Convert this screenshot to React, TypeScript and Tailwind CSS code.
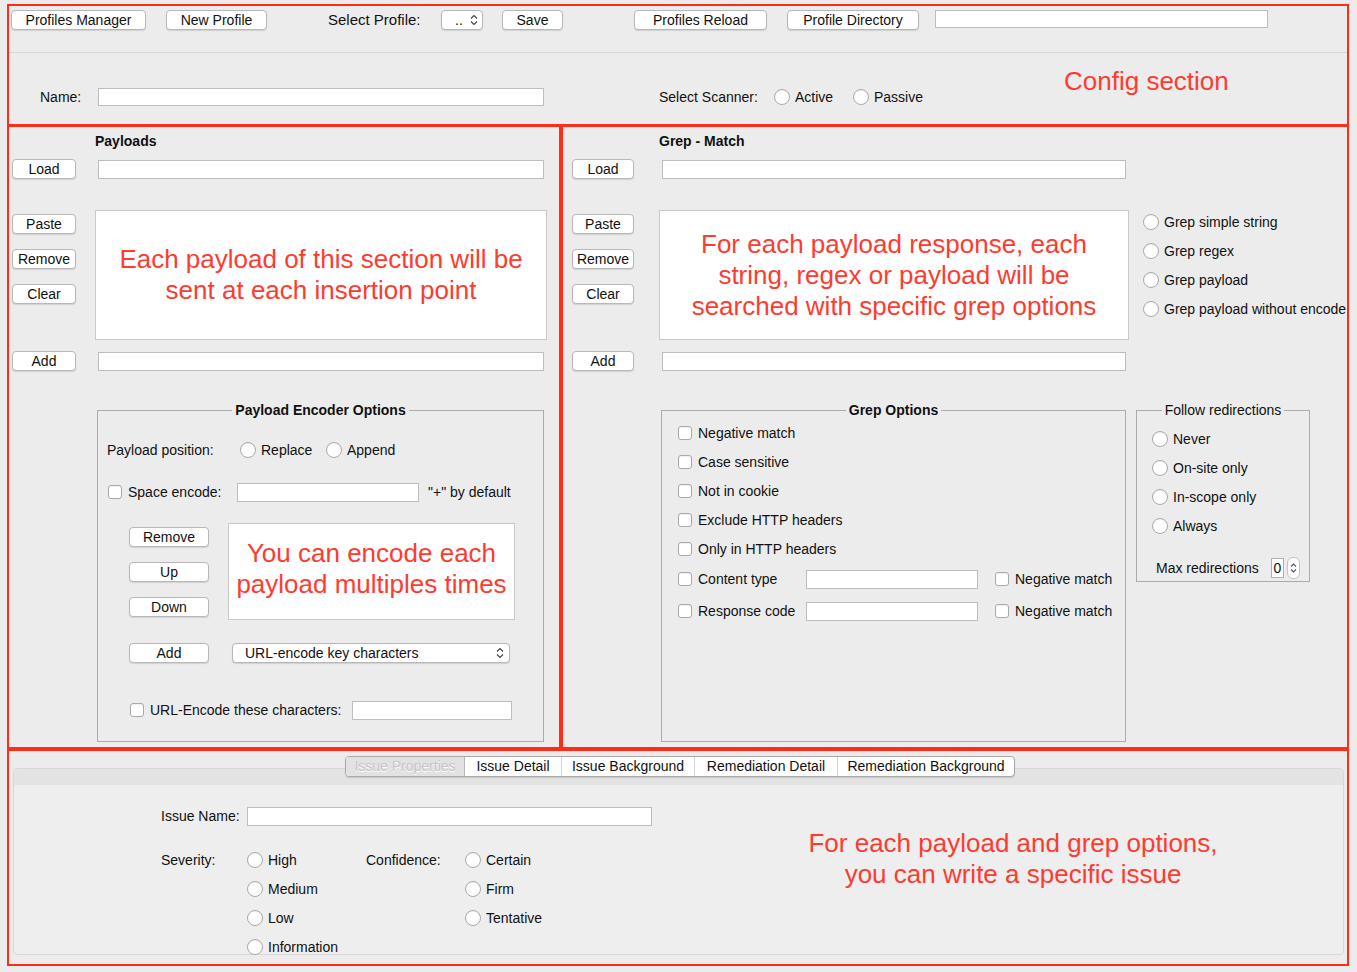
import React from 'react'

// Burp extension "BurpBounty" style profile editor, annotated with red boxes

function Btn({ label, w }: { label: string; w: string }) {
  return (
    <button
      className={`${w} h-[20px] shrink-0 flex items-center justify-center rounded-[4px] border border-[#b8b8b8] bg-white text-[14px] leading-none text-[#111] shadow-[0_1px_1px_rgba(0,0,0,0.12)]`}
    >
      {label}
    </button>
  )
}

function Field({ w, h = 'h-[19px]' }: { w: string; h?: string }) {
  return <div className={`${w} ${h} shrink-0 border border-[#bdbdbd] bg-white`} />
}

function Radio({ label, w = '' }: { label: string; w?: string }) {
  return (
    <div className={`${w} flex items-center shrink-0`}>
      <span className="w-[16px] h-[16px] shrink-0 rounded-full border border-[#a9a9a9] bg-white shadow-[inset_0_1px_1px_rgba(0,0,0,0.06)]" />
      <span className="ml-[5px] text-[14px] whitespace-nowrap">{label}</span>
    </div>
  )
}

function Check({ label, w = '' }: { label: string; w?: string }) {
  return (
    <div className="flex items-center shrink-0">
      <span className="w-[14px] h-[14px] shrink-0 rounded-[3px] border border-[#a9a9a9] bg-white shadow-[inset_0_1px_1px_rgba(0,0,0,0.06)]" />
      <span className={`${w} ml-[6px] text-[14px] whitespace-nowrap`}>{label}</span>
    </div>
  )
}

function Chevrons({ className = '' }: { className?: string }) {
  return (
    <svg width="8" height="12" viewBox="0 0 8 12" className={className}>
      <path d="M1 4.5 L4 1.5 L7 4.5 M1 7.5 L4 10.5 L7 7.5" fill="none" stroke="#444" strokeWidth="1.2" />
    </svg>
  )
}

function Note({ children, className = '' }: { children: React.ReactNode; className?: string }) {
  return (
    <div className={`text-[26px] leading-[31px] text-[#ff3b30] text-center font-['Liberation_Sans',Arial,sans-serif] ${className}`}>
      {children}
    </div>
  )
}

export default function App() {
  return (
    <div className="w-[1357px] h-[972px] overflow-hidden bg-[#ececec] pt-[4px] pl-[7px] text-[#111] font-['Liberation_Sans',Arial,sans-serif]">
      {/* Config section */}
      <div className="w-[1342px] h-[122px] border-2 border-[#ff2d16]">
        <div className="flex items-center h-[20px] mt-[4px]">
          <div className="ml-[2px]">
            <Btn label="Profiles Manager" w="w-[135px]" />
          </div>
          <div className="ml-[20px]">
            <Btn label="New Profile" w="w-[101px]" />
          </div>
          <span className="ml-[61px] w-[113px] text-[15px]">Select Profile:</span>
          <div className="w-[42px] h-[20px] flex items-center rounded-[4px] border border-[#b8b8b8] bg-white shadow-[0_1px_1px_rgba(0,0,0,0.12)]">
            <span className="ml-[13px] text-[14px] leading-none">..</span>
            <Chevrons className="ml-[7px]" />
          </div>
          <div className="ml-[19px]">
            <Btn label="Save" w="w-[61px]" />
          </div>
          <div className="ml-[71px]">
            <Btn label="Profiles Reload" w="w-[133px]" />
          </div>
          <div className="ml-[20px]">
            <Btn label="Profile Directory" w="w-[132px]" />
          </div>
          <div className="ml-[16px] self-start">
            <Field w="w-[333px]" h="h-[18px]" />
          </div>
        </div>
        <div className="mt-[22px] h-px bg-[#d6d6d6]" />
        <div className="flex items-center h-[18px] mt-[35px]">
          <span className="ml-[31px] w-[58px] text-[14px]">Name:</span>
          <Field w="w-[446px]" h="h-[18px]" />
          <span className="ml-[115px] w-[115px] text-[14px]">Select Scanner:</span>
          <Radio label="Active" w="w-[79px]" />
          <Radio label="Passive" w="w-[80px]" />
          <Note className="ml-[131px] mb-[32px] whitespace-nowrap">Config section</Note>
        </div>
      </div>

      <div className="flex -mt-[1px]">
        {/* Payloads */}
        <div className="w-[554px] h-[624px] border-2 border-[#ff2d16]">
          <div className="h-[18px] mt-[5px] pl-[86px] flex items-center text-[14px] font-bold">Payloads</div>
          <div className="flex items-center h-[20px] mt-[9px]">
            <div className="ml-[3px]">
              <Btn label="Load" w="w-[64px]" />
            </div>
            <div className="ml-[22px]">
              <Field w="w-[446px]" />
            </div>
          </div>
          <div className="flex mt-[31px]">
            <div className="ml-[3px] pt-[4px] flex flex-col gap-[15px]">
              <Btn label="Paste" w="w-[64px]" />
              <Btn label="Remove" w="w-[64px]" />
              <Btn label="Clear" w="w-[64px]" />
            </div>
            <div className="ml-[19px] w-[452px] h-[130px] border border-[#c8c8c8] bg-white flex items-center justify-center">
              <Note>
                Each payload of this section will be
                <br />
                sent at each insertion point
              </Note>
            </div>
          </div>
          <div className="flex items-center h-[20px] mt-[11px]">
            <div className="ml-[3px]">
              <Btn label="Add" w="w-[64px]" />
            </div>
            <div className="ml-[22px]">
              <Field w="w-[446px]" />
            </div>
          </div>

          <fieldset className="mt-[30px] ml-[88px] w-[447px] h-[341px] border border-[#ababab]">
            <legend className="mx-auto px-[3px] text-[14px] leading-[18px] font-bold">Payload Encoder Options</legend>
            <div className="flex items-center h-[20px] mt-[21px]">
              <span className="ml-[9px] w-[133px] text-[14px]">Payload position:</span>
              <Radio label="Replace" w="w-[86px]" />
              <Radio label="Append" />
            </div>
            <div className="flex items-center h-[20px] mt-[22px]">
              <div className="ml-[10px]">
                <Check label="Space encode:" w="w-[109px]" />
              </div>
              <Field w="w-[182px]" />
              <span className="ml-[9px] text-[14px]">"+" by default</span>
            </div>
            <div className="flex mt-[21px]">
              <div className="ml-[31px] pt-[4px] flex flex-col gap-[15px]">
                <Btn label="Remove" w="w-[80px]" />
                <Btn label="Up" w="w-[80px]" />
                <Btn label="Down" w="w-[80px]" />
              </div>
              <div className="ml-[19px] w-[287px] h-[97px] border border-[#c8c8c8] bg-white flex items-center justify-center pb-[6px]">
                <Note className="whitespace-nowrap">
                  You can encode each
                  <br />
                  payload multiples times
                </Note>
              </div>
            </div>
            <div className="flex items-center h-[20px] mt-[23px]">
              <div className="ml-[31px]">
                <Btn label="Add" w="w-[80px]" />
              </div>
              <div className="ml-[23px] w-[278px] h-[20px] flex items-center rounded-[4px] border border-[#b8b8b8] bg-white shadow-[0_1px_1px_rgba(0,0,0,0.12)]">
                <span className="ml-[12px] text-[14px] leading-none">URL-encode key characters</span>
                <Chevrons className="ml-auto mr-[5px]" />
              </div>
            </div>
            <div className="flex items-center h-[20px] mt-[37px]">
              <div className="ml-[32px]">
                <Check label="URL-Encode these characters:" w="w-[202px]" />
              </div>
              <Field w="w-[160px]" />
            </div>
          </fieldset>
        </div>

        {/* Grep - Match */}
        <div className="w-[788px] h-[624px] border-2 border-[#ff2d16]">
          <div className="h-[18px] mt-[5px] pl-[96px] flex items-center text-[14px] font-bold">Grep - Match</div>
          <div className="flex items-center h-[20px] mt-[9px]">
            <div className="ml-[9px]">
              <Btn label="Load" w="w-[62px]" />
            </div>
            <div className="ml-[28px]">
              <Field w="w-[464px]" />
            </div>
          </div>
          <div className="flex mt-[31px]">
            <div className="ml-[9px] pt-[4px] flex flex-col gap-[15px]">
              <Btn label="Paste" w="w-[62px]" />
              <Btn label="Remove" w="w-[62px]" />
              <Btn label="Clear" w="w-[62px]" />
            </div>
            <div className="ml-[25px] w-[470px] h-[130px] border border-[#c8c8c8] bg-white flex items-center justify-center">
              <Note>
                For each payload response, each
                <br />
                string, regex or payload will be
                <br />
                searched with specific grep options
              </Note>
            </div>
            <div className="ml-[14px] pt-[2px] flex flex-col gap-[9px]">
              <div className="h-[20px] flex items-center"><Radio label="Grep simple string" /></div>
              <div className="h-[20px] flex items-center"><Radio label="Grep regex" /></div>
              <div className="h-[20px] flex items-center"><Radio label="Grep payload" /></div>
              <div className="h-[20px] flex items-center"><Radio label="Grep payload without encode" /></div>
            </div>
          </div>
          <div className="flex items-center h-[20px] mt-[11px]">
            <div className="ml-[9px]">
              <Btn label="Add" w="w-[62px]" />
            </div>
            <div className="ml-[28px]">
              <Field w="w-[464px]" />
            </div>
          </div>

          <div className="flex items-start mt-[30px]">
            <fieldset className="ml-[98px] w-[465px] h-[341px] border border-[#ababab]">
              <legend className="mx-auto px-[3px] text-[14px] leading-[18px] font-bold">Grep Options</legend>
              <div className="flex flex-col pl-[16px]">
                <div className="h-[20px] flex items-center mt-[4px]"><Check label="Negative match" /></div>
                <div className="h-[20px] flex items-center mt-[9px]"><Check label="Case sensitive" /></div>
                <div className="h-[20px] flex items-center mt-[9px]"><Check label="Not in cookie" /></div>
                <div className="h-[20px] flex items-center mt-[9px]"><Check label="Exclude HTTP headers" /></div>
                <div className="h-[20px] flex items-center mt-[9px]"><Check label="Only in HTTP headers" /></div>
                <div className="h-[20px] flex items-center mt-[10px]">
                  <Check label="Content type" w="w-[108px]" />
                  <Field w="w-[172px]" />
                  <div className="ml-[17px]"><Check label="Negative match" /></div>
                </div>
                <div className="h-[20px] flex items-center mt-[12px]">
                  <Check label="Response code" w="w-[108px]" />
                  <Field w="w-[172px]" />
                  <div className="ml-[17px]"><Check label="Negative match" /></div>
                </div>
              </div>
            </fieldset>
            <fieldset className="ml-[10px] w-[174px] h-[181px] border border-[#ababab]">
              <legend className="mx-auto px-[3px] text-[14px] leading-[18px]">Follow redirections</legend>
              <div className="flex flex-col pl-[15px]">
                <div className="h-[20px] flex items-center mt-[10px]"><Radio label="Never" /></div>
                <div className="h-[20px] flex items-center mt-[9px]"><Radio label="On-site only" /></div>
                <div className="h-[20px] flex items-center mt-[9px]"><Radio label="In-scope only" /></div>
                <div className="h-[20px] flex items-center mt-[9px]"><Radio label="Always" /></div>
              </div>
              <div className="flex items-center h-[22px] mt-[21px]">
                <span className="ml-[19px] w-[115px] text-[14px]">Max redirections</span>
                <div className="w-[13px] h-[20px] border border-[#b0b0b0] bg-white flex items-center justify-center text-[14px]">0</div>
                <div className="ml-[3px] w-[13px] h-[22px] rounded-[6px] border border-[#c4c4c4] bg-white flex items-center justify-center">
                  <svg width="7" height="12" viewBox="0 0 7 12">
                    <path d="M1 4.5 L3.5 2 L6 4.5 M1 7.5 L3.5 10 L6 7.5" fill="none" stroke="#555" strokeWidth="1.1" />
                  </svg>
                </div>
              </div>
            </fieldset>
          </div>
        </div>
      </div>

      {/* Issue */}
      <div className="w-[1342px] h-[217px] border-2 border-[#ff2d16]">
        <div className="relative z-10 ml-[336px] mt-[5px] h-[21px] w-fit flex rounded-[4px] border border-[#a9a9a9] bg-white text-[14px] shadow-[0_1px_1px_rgba(0,0,0,0.12)] overflow-hidden">
          <div className="w-[119px] flex items-center justify-center bg-[#e2e2e2] text-[#c4c4c4] [text-shadow:0_1px_0_#fff] border-r border-[#b8b8b8]">Issue Properties</div>
          <div className="w-[97px] flex items-center justify-center border-r border-[#d4d4d4]">Issue Detail</div>
          <div className="w-[133px] flex items-center justify-center border-r border-[#d4d4d4]">Issue Background</div>
          <div className="w-[143px] flex items-center justify-center border-r border-[#d4d4d4]">Remediation Detail</div>
          <div className="w-[176px] flex items-center justify-center">Remediation Background</div>
        </div>
        <div className="-mt-[9px] ml-[4px] w-[1331px] h-[187px] rounded-[4px] border border-[#d8d8d8] bg-[#eeeeee]">
          <div className="h-[16px] bg-[#e3e3e3] rounded-t-[4px]" />
          <div className="flex">
            <div className="w-[749px] shrink-0">
              <div className="flex items-center h-[19px] mt-[22px]">
                <span className="ml-[147px] w-[86px] text-[14px]">Issue Name:</span>
                <Field w="w-[405px]" />
              </div>
              <div className="flex mt-[24px]">
                <div className="ml-[147px] w-[86px] h-[20px] flex items-center text-[14px]">Severity:</div>
                <div className="w-[119px] flex flex-col gap-[9px]">
                  <div className="h-[20px] flex items-center"><Radio label="High" /></div>
                  <div className="h-[20px] flex items-center"><Radio label="Medium" /></div>
                  <div className="h-[20px] flex items-center"><Radio label="Low" /></div>
                  <div className="h-[20px] flex items-center"><Radio label="Information" /></div>
                </div>
                <div className="w-[99px] h-[20px] flex items-center text-[14px]">Confidence:</div>
                <div className="flex flex-col gap-[9px]">
                  <div className="h-[20px] flex items-center"><Radio label="Certain" /></div>
                  <div className="h-[20px] flex items-center"><Radio label="Firm" /></div>
                  <div className="h-[20px] flex items-center"><Radio label="Tentative" /></div>
                </div>
              </div>
            </div>
            <Note className="w-[500px] mt-[43px]">
              For each payload and grep options,
              <br />
              you can write a specific issue
            </Note>
          </div>
        </div>
      </div>
    </div>
  )
}
